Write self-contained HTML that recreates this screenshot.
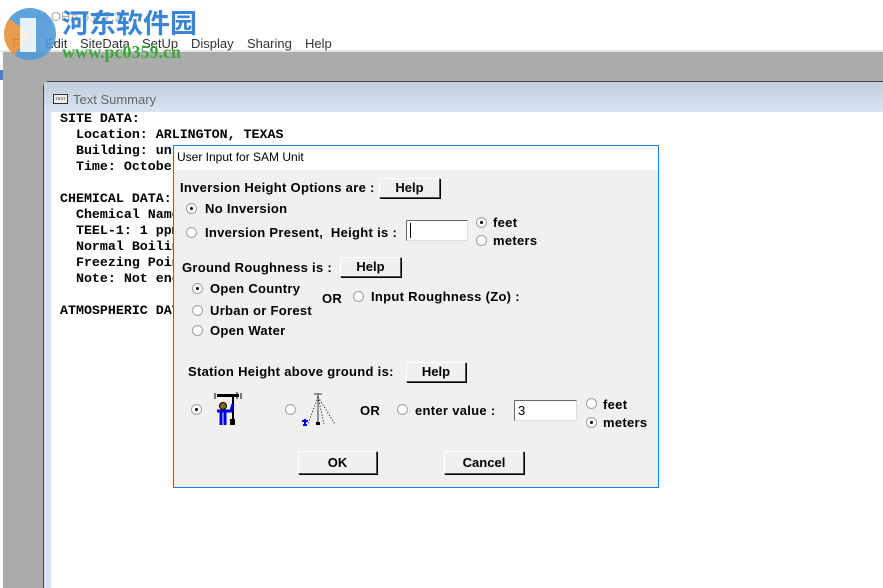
<!DOCTYPE html>
<html><head><meta charset="utf-8"><style>
*{margin:0;padding:0;box-sizing:border-box}
body{width:883px;height:588px;position:relative;overflow:hidden;background:#fff;font-family:"Liberation Sans","Noto Sans CJK SC",sans-serif}
.a{position:absolute;white-space:nowrap}
.menu{top:36px;font-size:13px;color:#333}
.mono{font-family:"Liberation Mono",monospace;font-weight:bold;font-size:13.3px;color:#000;line-height:16px}
.d{font-weight:bold;font-size:13px;letter-spacing:0.3px;color:#000}
.btn{position:absolute;background:#f0f0f0;border:1px solid;border-color:#fff #555 #555 #fff;box-shadow:1px 1px 0 #000;font-weight:bold;font-size:13px;text-align:center}
.r{position:absolute;width:11px;height:11px;border-radius:50%;background:#fff;border:1px solid #a0a0a0}
.r.c::after{content:"";position:absolute;left:3px;top:3px;width:3px;height:3px;border-radius:50%;background:#000}
.in{position:absolute;background:#fff;border:1px solid;border-color:#666 #ddd #ddd #666;font-size:13px;padding-left:3px;line-height:19px}
</style></head><body>
<div class="a" style="left:0;top:50px;width:883px;height:2px;background:#e6e6e6"></div>
<div class="a" style="left:3px;top:52px;width:880px;height:536px;background:#ababab"></div>
<div class="a" style="left:0;top:70px;width:3px;height:10px;background:#4a7fd0"></div>
<div class="a" style="left:43px;top:81px;width:840px;height:507px;background:#d6e2ef;border-left:1px solid #444;border-top:1px solid #444;border-top-left-radius:6px"></div>
<div class="a" style="left:44px;top:82px;width:839px;height:30px;background:linear-gradient(#c0cedc,#d8e4f1)"></div>
<div class="a" style="left:51px;top:112px;width:832px;height:476px;background:#fff"></div>
<div class="a" style="left:53px;top:94px;width:15px;height:10px;border:1px solid #333;background:#eee;font-size:4px;line-height:8px;text-align:center">TEXT</div>
<div class="a" style="left:73px;top:92px;font-size:13px;color:#666">Text Summary</div>
<div class="a mono" style="left:60px;top:111px">SITE DATA:<br>&nbsp;&nbsp;Location: ARLINGTON, TEXAS<br>&nbsp;&nbsp;Building: uns<br>&nbsp;&nbsp;Time: October<br><br>CHEMICAL DATA:<br>&nbsp;&nbsp;Chemical Name<br>&nbsp;&nbsp;TEEL-1: 1 ppm<br>&nbsp;&nbsp;Normal Boilin<br>&nbsp;&nbsp;Freezing Poin<br>&nbsp;&nbsp;Note: Not enc<br><br>ATMOSPHERIC DAT</div>
<!-- menu -->
<div class="a menu" style="left:12px">File</div><div class="a menu" style="left:45px">Edit</div><div class="a menu" style="left:80px">SiteData</div><div class="a menu" style="left:142px">SetUp</div><div class="a menu" style="left:191px">Display</div><div class="a menu" style="left:247px">Sharing</div><div class="a menu" style="left:305px">Help</div>
<div class="a" style="left:35px;top:9px;font-size:13px;color:#aaa">ALOHA 5.4.7.2</div>
<!-- watermark -->
<div class="a" style="left:4px;top:8px;width:52px;height:52px;border-radius:50%;background:conic-gradient(#4f9ad8 0 60%,#e8913a 60% 85%,#4f9ad8 85%);opacity:.9"></div>
<div class="a" style="left:20px;top:18px;width:16px;height:34px;background:#fff;opacity:.85"></div>
<div class="a" style="left:62px;top:6px;font-size:27px;font-weight:bold;color:#3a86d4;font-family:'Noto Sans CJK SC',sans-serif;line-height:32px">河东软件园</div>
<div class="a" style="left:62px;top:42px;font-size:18px;font-weight:bold;color:#3aa83a;font-family:'Liberation Serif',serif">www.pc0359.cn</div>
<!-- dialog -->
<div class="a" style="left:173px;top:145px;width:486px;height:343px;background:#f0f0f0;border:1px solid #1c7ad2"></div>
<div class="a" style="left:174px;top:146px;width:484px;height:24px;background:#fff"></div>
<div class="a" style="left:177px;top:150px;font-size:12px;color:#000">User Input for SAM Unit</div>
<div class="a d" style="left:180px;top:180px">Inversion Height Options are :</div>
<div class="btn" style="left:379px;top:178px;width:61px;height:20px;line-height:18px">Help</div>
<div class="r c" style="left:186px;top:203px"></div><div class="a d" style="left:205px;top:201px">No Inversion</div>
<div class="r" style="left:186px;top:227px"></div><div class="a d" style="left:205px;top:225px">Inversion Present,&nbsp; Height is :</div>
<div class="in" style="left:406px;top:220px;width:62px;height:21px"><span style="border-left:1px solid #000">&nbsp;</span></div>
<div class="r c" style="left:476px;top:217px"></div><div class="a d" style="left:493px;top:215px">feet</div>
<div class="r" style="left:476px;top:235px"></div><div class="a d" style="left:493px;top:233px">meters</div>
<div class="a d" style="left:182px;top:260px">Ground Roughness is :</div>
<div class="btn" style="left:340px;top:257px;width:61px;height:20px;line-height:18px">Help</div>
<div class="r c" style="left:192px;top:283px"></div><div class="a d" style="left:210px;top:281px">Open Country</div>
<div class="r" style="left:192px;top:305px"></div><div class="a d" style="left:210px;top:303px">Urban or Forest</div>
<div class="r" style="left:192px;top:325px"></div><div class="a d" style="left:210px;top:323px">Open Water</div>
<div class="a d" style="left:322px;top:291px">OR</div>
<div class="r" style="left:353px;top:291px"></div><div class="a d" style="left:371px;top:289px">Input Roughness (Zo) :</div>
<div class="a d" style="left:188px;top:364px">Station Height above ground is:</div>
<div class="btn" style="left:406px;top:362px;width:60px;height:20px;line-height:18px">Help</div>
<div class="r c" style="left:191px;top:404px"></div>
<svg class="a" style="left:213px;top:391px" width="32" height="36" viewBox="0 0 32 36">
<rect x="4" y="3" width="22" height="3" fill="#000"/><path d="M2 2v6M28 2v6M24 1v7" stroke="#000"/>
<rect x="19" y="6" width="2" height="24" fill="#000"/><rect x="17" y="28" width="5" height="6" fill="#000"/>
<circle cx="10" cy="15" r="3.5" fill="#886a00" stroke="#000"/>
<path d="M4 20h14l2-7M8 19v8M12 19v8M8 27v7M12 27v7" stroke="#0000e0" stroke-width="3" fill="none"/></svg>
<div class="r" style="left:285px;top:404px"></div>
<svg class="a" style="left:300px;top:391px" width="38" height="36" viewBox="0 0 38 36">
<path d="M18 2v31M14 3h8" stroke="#777" stroke-width="1.5"/><path d="M18 6L8 33M18 6L35 33M18 6L24 33" stroke="#000" stroke-dasharray="1 2"/>
<rect x="16" y="31" width="4" height="3" fill="#000"/><path d="M2 30h6M5 28v6M3 34h4" stroke="#0000e0" stroke-width="2"/></svg>
<div class="a d" style="left:360px;top:403px">OR</div>
<div class="r" style="left:397px;top:404px"></div><div class="a d" style="left:415px;top:403px">enter value :</div>
<div class="in" style="left:514px;top:400px;width:63px;height:21px">3</div>
<div class="r" style="left:586px;top:398px"></div><div class="a d" style="left:603px;top:397px">feet</div>
<div class="r c" style="left:586px;top:417px"></div><div class="a d" style="left:603px;top:415px">meters</div>
<div class="btn" style="left:298px;top:451px;width:79px;height:23px;line-height:21px">OK</div>
<div class="btn" style="left:444px;top:451px;width:80px;height:23px;line-height:21px">Cancel</div>
</body></html>
